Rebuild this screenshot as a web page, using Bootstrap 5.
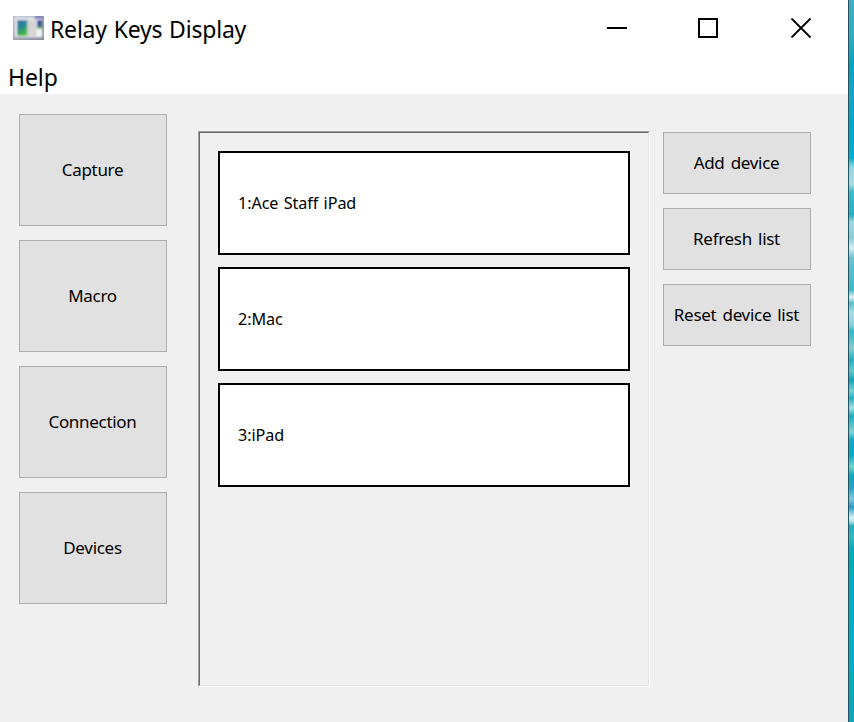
<!DOCTYPE html>
<html lang="en">
<head>
<meta charset="utf-8">
<title>Relay Keys Display</title>
<link rel="stylesheet" href="https://cdn.jsdelivr.net/npm/bootstrap@5.3.0/dist/css/bootstrap.min.css">
<style>
body{height:722px;background:#f0f0f0;color:#000;font-family:"Noto Sans",sans-serif}
.app-window{width:848px;background:#f0f0f0}
.title-bar{height:62px;padding:0 35px 6px 13px}
.title-text{font-size:23px;letter-spacing:-.2px;word-spacing:1px;line-height:30px;margin-left:6px;margin-top:2px}
.menu-strip{height:32px;padding-left:8px;font-size:23px;letter-spacing:-.1px;line-height:31px}
.side{width:148px;gap:14px}
.left-side{margin:20px 0 0 19px}
.right-side{margin:38px 0 0 13px}
.win-btn{--bs-btn-padding-x:0;--bs-btn-padding-y:0;--bs-btn-border-radius:0;--bs-btn-bg:#e1e1e1;--bs-btn-border-color:#adadad;--bs-btn-color:#000;--bs-btn-hover-bg:#e5f1fb;--bs-btn-hover-border-color:#0078d7;padding-right:1px;font-size:17px;letter-spacing:-.3px;word-spacing:2px;height:62px;white-space:nowrap}
.tall{height:112px}
.sunken{width:452px;height:556px;margin:37px 0 0 31px;border:1px solid;border-color:#a0a0a0 #fff #fff #a0a0a0}
.sunken-inner{height:100%;border:1px solid;border-color:#696969 #e3e3e3 #e3e3e3 #696969;padding:18px;gap:12px}
.device{height:104px;border:2px solid #000;background:#fff;padding-left:18px;padding-top:1px;font-size:16.2px;letter-spacing:-.1px;word-spacing:1.3px}
.desktop{width:6px;border-left:1px solid #24545f;background:linear-gradient(#43adc4 0,#31a9c2 40px,#05a3bd 65px,#16a6c2 95px,#03a7c3 120px,#04aeca 158px,#8fd3df 167px,#a9dde5 184px,#3bbbd0 192px,#25acc4 215px,#a0d5e2 222px,#8bccda 238px,#d5edf0 248px,#69c2d2 258px,#40b6c9 290px,#e2f4f5 297px,#56bccb 303px,#a7dce4 312px,#8ed2df 324px,#34b4c8 332px,#8accd4 348px,#26acbe 360px,#67c5ce 371px,#12a5ba 380px,#7bced6 391px,#22b0c6 398px,#a6dde1 408px,#18acbf 416px,#85d0d4 432px,#12abc4 440px,#07acc5 455px,#75cfce 467px,#11a9be 475px,#2c9fc7 488px,#80c6dd 499px,#2798c7 507px,#d4eeef 517px,#bde6e9 521px,#22aebf 526px,#36b7c3 537px,#02abbd 550px,#00b0c4 640px,#10a3b9 722px)}
</style>
</head>
<body class="d-flex overflow-hidden">
<div class="app-window d-flex flex-column flex-shrink-0">
  <header class="title-bar bg-white d-flex align-items-center">
    <svg width="31" height="26" viewBox="0 0 31 26">
      <defs>
        <linearGradient id="frame" x2="1" y2="1"><stop stop-color="#b5bac8"/><stop offset="1" stop-color="#8a8d9b"/></linearGradient>
        <linearGradient id="pane" x2=".4" y2="1"><stop stop-color="#2f6fa8"/><stop offset=".5" stop-color="#27889a"/><stop offset="1" stop-color="#46bb35"/></linearGradient>
        <linearGradient id="small" y2="1" x2="0"><stop stop-color="#2740a0"/><stop offset=".6" stop-color="#315fa0"/><stop offset="1" stop-color="#40b642"/></linearGradient>
        <filter id="soft" x="0" y="0" width="1" height="1"><feGaussianBlur stdDeviation=".8"/></filter>
      </defs>
      <path fill="url(#frame)" d="M0 1h31v24H0z"/>
      <g filter="url(#soft)">
        <path fill="url(#frame)" d="M0 1h31v24H0z"/>
        <path fill="#d7dbea" d="M1 1.500h20v2.500H1z"/><path fill="#7778ba" d="M22 1h8v3h-8z"/>
        <path fill="#f1f4f5" d="M2 4h27v18H2z"/>
        <path fill="url(#pane)" d="M4 5h10.500v16H4z"/>
        <path fill="#d5d3d4" d="M14.500 5h9v16h-9z"/>
        <path fill="url(#small)" d="M24 5h5v8.500h-5z"/>
      </g>
    </svg>
    <span class="title-text">Relay Keys Display</span>
    <svg class="ms-auto" width="206" height="22" viewBox="0 0 206 22" fill="none" stroke="#000" stroke-width="2">
      <path d="M0 11h20M92 2h18v18H92z"/><path d="M184.500 1.500l19 19m0-19l-19 19" stroke-width="1.800"/>
    </svg>
  </header>
  <nav class="menu-strip bg-white">Help</nav>
  <main class="d-flex align-items-start">
    <div class="side left-side d-flex flex-column">
      <button class="btn win-btn tall">Capture</button>
      <button class="btn win-btn tall">Macro</button>
      <button class="btn win-btn tall">Connection</button>
      <button class="btn win-btn tall">Devices</button>
    </div>
    <div class="sunken"><div class="sunken-inner d-flex flex-column">
      <div class="device d-flex align-items-center">1:Ace Staff iPad</div>
      <div class="device d-flex align-items-center">2:Mac</div>
      <div class="device d-flex align-items-center">3:iPad</div>
    </div></div>
    <div class="side right-side d-flex flex-column">
      <button class="btn win-btn">Add device</button>
      <button class="btn win-btn">Refresh list</button>
      <button class="btn win-btn">Reset device list</button>
    </div>
  </main>
</div>
<div class="desktop flex-shrink-0"></div>
<script src="https://cdn.jsdelivr.net/npm/bootstrap@5.3.0/dist/js/bootstrap.bundle.min.js"></script>
</body>
</html>
